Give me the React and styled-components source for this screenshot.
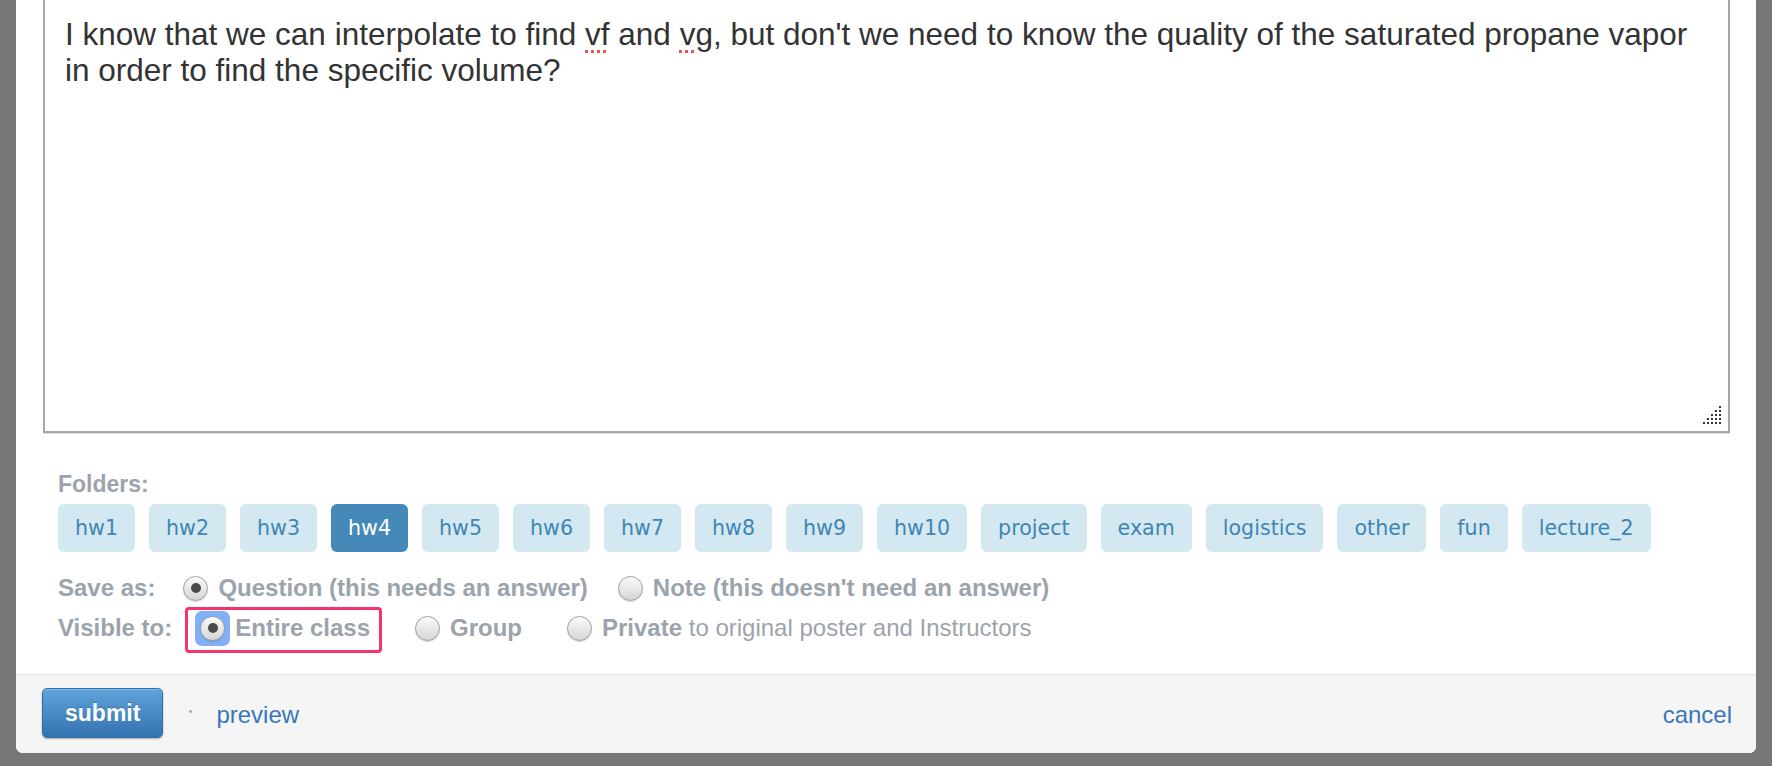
import React from 'react';
import styled, { createGlobalStyle, css } from 'styled-components';

const GlobalStyle = createGlobalStyle`
  html, body {
    margin: 0;
    padding: 0;
    background: #777777;
    overflow: hidden;
  }
  body {
    font-family: "Liberation Sans", Arial, Helvetica, sans-serif;
  }
`;

const Page = styled.div`
  padding: 0 16px 13px 16px;
  background: #777777;
`;

const Modal = styled.div`
  background: #ffffff;
  border-radius: 0 0 7px 7px;
  overflow: hidden;
`;

const Body = styled.div`
  padding: 0 26px 26px 27px;
`;

const Editor = styled.div`
  position: relative;
  box-sizing: border-box;
  height: 433px;
  padding: 16px 22px 18px 20px;
  border: 2px solid #a7a7a7;
  border-top: 0;
  background: #fff;
  box-shadow: 0 1px 0 #dcdcdc;
  color: #333333;
  font-size: 31.5px;
  line-height: 36px;
`;

const Misspelled = styled.span`
  text-decoration: underline dotted #e8554e;
  text-decoration-thickness: 3px;
  text-underline-offset: 5px;
`;

const Grip = styled.svg`
  position: absolute;
  right: 5px;
  bottom: 5px;
`;

const Section = styled.div`
  padding-left: 15px;
`;

const FieldLabel = styled.div`
  margin-top: 37px;
  font-size: 23px;
  line-height: 28px;
  font-weight: bold;
  color: #9ba3ad;
`;

const ChipRow = styled.div`
  display: flex;
  gap: 14px;
  margin-top: 6px;
`;

const Chip = styled.span`
  display: inline-flex;
  align-items: center;
  height: 48px;
  padding: 0 17px;
  border-radius: 6px;
  font-family: "DejaVu Sans", Verdana, sans-serif;
  font-size: 20.6px;
  background: ${p => (p.$active ? '#4589b8' : '#d3e8f1')};
  color: ${p => (p.$active ? '#ffffff' : '#3f86b4')};
`;

const Rows = styled.div`
  margin-top: 16px;
`;

const Row = styled.div`
  display: flex;
  align-items: center;
  height: 40px;
  font-size: 24px;
  color: #9ba3ad;
`;

const RowLabel = styled.span`
  font-weight: bold;
  margin-right: 28px;
`;

const Option = styled.span`
  position: relative;
  display: flex;
  align-items: center;
  align-self: stretch;
  margin-right: ${p => p.$gap}px;
  ${p =>
    p.$highlight &&
    css`
      &::after {
        content: '';
        position: absolute;
        left: -15px;
        right: -12px;
        top: -1px;
        bottom: -5px;
        border: 3px solid #f5346f;
        border-radius: 4px;
        pointer-events: none;
      }
    `}
`;

const FocusRing = styled.span`
  display: flex;
  padding: 5px;
  margin: -5px;
  border-radius: 7px;
  background: ${p => (p.$on ? 'rgba(98, 155, 246, 0.8)' : 'transparent')};
`;

const Radio = styled.span`
  box-sizing: border-box;
  width: 25px;
  height: 25px;
  border-radius: 50%;
  border: 1px solid #9d9d9d;
  background: linear-gradient(#fafafa, #d6d6d6);
  box-shadow: inset 0 1px 0 #ffffff, 0 1px 1px rgba(0, 0, 0, 0.15);
  display: flex;
  align-items: center;
  justify-content: center;
  ${p =>
    p.$checked &&
    css`
      &::after {
        content: '';
        width: 10px;
        height: 10px;
        border-radius: 50%;
        background: #4a4a4a;
      }
    `}
`;

const OptionText = styled.span`
  margin-left: 10px;
  white-space: nowrap;
`;

const Strong = styled.b`
  font-weight: bold;
`;

const Footer = styled.div`
  display: flex;
  align-items: center;
  padding: 13px 24px 15px 26px;
  border-top: 1px solid #e5e5e5;
  background: #f5f5f5;
`;

const SubmitButton = styled.button`
  height: 50px;
  padding: 0 22px;
  border: 1px solid #2f6ea8;
  border-radius: 5px;
  background: linear-gradient(#60a3da, #3273b0);
  box-shadow: 0 1px 2px rgba(0, 0, 0, 0.3), inset 0 1px 0 rgba(255, 255, 255, 0.25);
  color: #ffffff;
  font-family: inherit;
  font-size: 23px;
  font-weight: bold;
  text-shadow: 0 -1px 0 rgba(0, 0, 0, 0.2);
`;

const Dot = styled.span`
  width: 3px;
  height: 3px;
  border-radius: 50%;
  background: #a9a9a9;
  margin: 0 24px 0 26px;
  align-self: center;
  transform: translateY(-2px);
`;

const Link = styled.a`
  color: #3a77b6;
  font-size: 24px;
  text-decoration: none;
  margin-top: 4px;
`;

const Spacer = styled.div`
  flex: 1;
`;

const folders = ['hw1', 'hw2', 'hw3', 'hw4', 'hw5', 'hw6', 'hw7', 'hw8', 'hw9', 'hw10', 'project', 'exam', 'logistics', 'other', 'fun', 'lecture_2'];

const GripIcon = () => {
  const dots = [];
  for (let r = 0; r < 5; r++) {
    for (let c = 4 - r; c < 5; c++) {
      dots.push(<rect key={`${r}-${c}`} x={c * 4 + 2} y={r * 4} width="2" height="2" fill="#333" />);
    }
  }
  return (
    <Grip width="22" height="20" viewBox="0 0 22 20">
      {dots}
    </Grip>
  );
};

const RadioOption = ({ checked, focused, highlight, gap, children }) => (
  <Option $gap={gap} $highlight={highlight}>
    <FocusRing $on={focused}>
      <Radio $checked={checked} />
    </FocusRing>
    <OptionText>{children}</OptionText>
  </Option>
);

const App = () => {
  return (
    <>
      <GlobalStyle />
      <Page>
        <Modal>
          <Body>
            <Editor>
              I know that we can interpolate to find <Misspelled>vf</Misspelled> and <Misspelled>vg</Misspelled>, but
              don't we need to know the quality of the saturated propane vapor in order to find the specific volume?
              <GripIcon />
            </Editor>
            <Section>
              <FieldLabel>Folders:</FieldLabel>
              <ChipRow>
                {folders.map(f => (
                  <Chip key={f} $active={f === 'hw4'}>{f}</Chip>
                ))}
              </ChipRow>
              <Rows>
                <Row>
                  <RowLabel>Save as:</RowLabel>
                  <RadioOption checked gap={30}>
                    <Strong>Question (this needs an answer)</Strong>
                  </RadioOption>
                  <RadioOption gap={30}>
                    <Strong>Note (this doesn't need an answer)</Strong>
                  </RadioOption>
                </Row>
                <Row>
                  <RowLabel>Visible to:</RowLabel>
                  <RadioOption checked focused highlight gap={45}>
                    <Strong>Entire class</Strong>
                  </RadioOption>
                  <RadioOption gap={45}>
                    <Strong>Group</Strong>
                  </RadioOption>
                  <RadioOption gap={0}>
                    <Strong>Private</Strong> to original poster and Instructors
                  </RadioOption>
                </Row>
              </Rows>
            </Section>
          </Body>
          <Footer>
            <SubmitButton>submit</SubmitButton>
            <Dot />
            <Link href="#">preview</Link>
            <Spacer />
            <Link href="#">cancel</Link>
          </Footer>
        </Modal>
      </Page>
    </>
  );
};

export default App;
